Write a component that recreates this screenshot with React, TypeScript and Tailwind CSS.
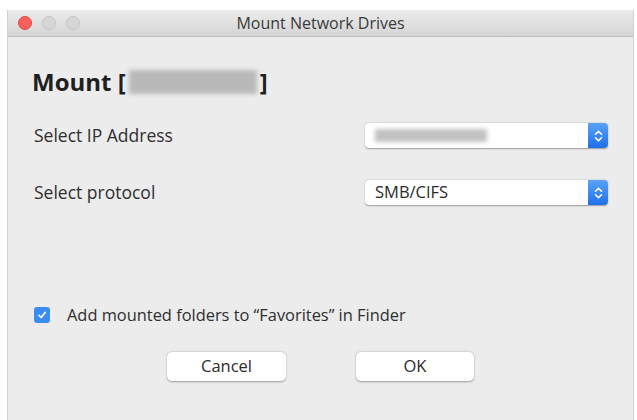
import React from "react";

// Mac-style "Mount Network Drives" sheet

const FONT = { fontFamily: '"Open Sans", "Liberation Sans", Arial, sans-serif' };

function Stepper() {
  return (
    <div className="flex h-full w-[20px] items-center justify-center rounded-r-[4px] bg-gradient-to-b from-[#5aa2f8] to-[#1c6fe8]">
      <svg width="9" height="14" viewBox="0 0 9 14" fill="none">
        <path d="M1.5 5.2 4.5 2.2 7.5 5.2" stroke="white" strokeWidth="1.6" strokeLinecap="round" strokeLinejoin="round" />
        <path d="M1.5 8.8 4.5 11.8 7.5 8.8" stroke="white" strokeWidth="1.6" strokeLinecap="round" strokeLinejoin="round" />
      </svg>
    </div>
  );
}

function Select({ children }: { children?: React.ReactNode }) {
  return (
    <div className="flex h-[25px] w-[243px] items-stretch rounded-[4px] bg-white shadow-[0_0.5px_1.5px_rgba(0,0,0,0.35)]">
      <div className="flex flex-1 items-center pl-[10px] text-[16.5px] text-[#2a2a2a]">{children}</div>
      <Stepper />
    </div>
  );
}

function Button({ label, w }: { label: string; w: string }) {
  return (
    <button
      className={`flex h-[29px] ${w} items-center justify-center rounded-[5px] bg-white text-[16.5px] text-[#2a2a2a] shadow-[0_0.5px_2px_rgba(0,0,0,0.35)]`}
    >
      {label}
    </button>
  );
}

export default function App() {
  return (
    <div className="h-[420px] w-[637px] overflow-hidden bg-white pl-[7px] pt-[10px]" style={FONT}>
      <div className="flex h-[420px] w-[627px] flex-col border-x border-[#d2d2d2] bg-[#ececec]">
        {/* Title bar */}
        <div className="relative flex h-[27px] items-center justify-center border-b border-[#bdbdbd] bg-gradient-to-b from-[#ebebeb] to-[#d5d5d5]">
          <div className="absolute left-[10px] top-[6px] flex gap-[10px]">
            <span className="h-[14px] w-[14px] rounded-full border border-[#e2463f] bg-[#fc605b]" />
            <span className="h-[14px] w-[14px] rounded-full border border-[#c4c4c4] bg-[#d6d6d6]" />
            <span className="h-[14px] w-[14px] rounded-full border border-[#c4c4c4] bg-[#d6d6d6]" />
          </div>
          <span className="text-[16px] text-[#3a3a3a]">Mount Network Drives</span>
        </div>

        {/* Heading */}
        <div className="mt-[29px] flex h-[32px] items-center pl-[24px] text-[24px] font-bold text-[#1f1f1f]">
          <span>Mount [</span>
          <span className="mx-[3px] h-[24px] w-[128px] bg-[#b9b9b9] blur-[2px]" />
          <span>]</span>
        </div>

        {/* IP address */}
        <div className="mt-[25px] flex h-[25px] items-center pl-[26px]">
          <span className="w-[331px] text-[17.5px] text-[#2f2f2f]">Select IP Address</span>
          <Select>
            <span className="h-[13px] w-[112px] bg-[#c2c2c2] blur-[2px]" />
          </Select>
        </div>

        {/* Protocol */}
        <div className="mt-[32px] flex h-[25px] items-center pl-[26px]">
          <span className="w-[331px] text-[17.5px] text-[#2f2f2f]">Select protocol</span>
          <Select>SMB/CIFS</Select>
        </div>

        {/* Favorites checkbox */}
        <div className="mt-[102px] flex h-[16px] items-center pl-[26px]">
          <span className="flex h-[16px] w-[16px] items-center justify-center rounded-[3px] bg-[#3b8cf0]">
            <svg width="10" height="10" viewBox="0 0 10 10" fill="none">
              <path d="M2 5.3 4.1 7.4 8.2 2.4" stroke="white" strokeWidth="1.6" strokeLinecap="round" strokeLinejoin="round" />
            </svg>
          </span>
          <span className="ml-[17px] text-[16.4px] text-[#2f2f2f]">
            Add mounted folders to “Favorites” in Finder
          </span>
        </div>

        {/* Buttons */}
        <div className="mt-[29px] flex pl-[159px]">
          <Button label="Cancel" w="w-[119px]" />
          <div className="w-[70px]" />
          <Button label="OK" w="w-[118px]" />
        </div>
      </div>
    </div>
  );
}
